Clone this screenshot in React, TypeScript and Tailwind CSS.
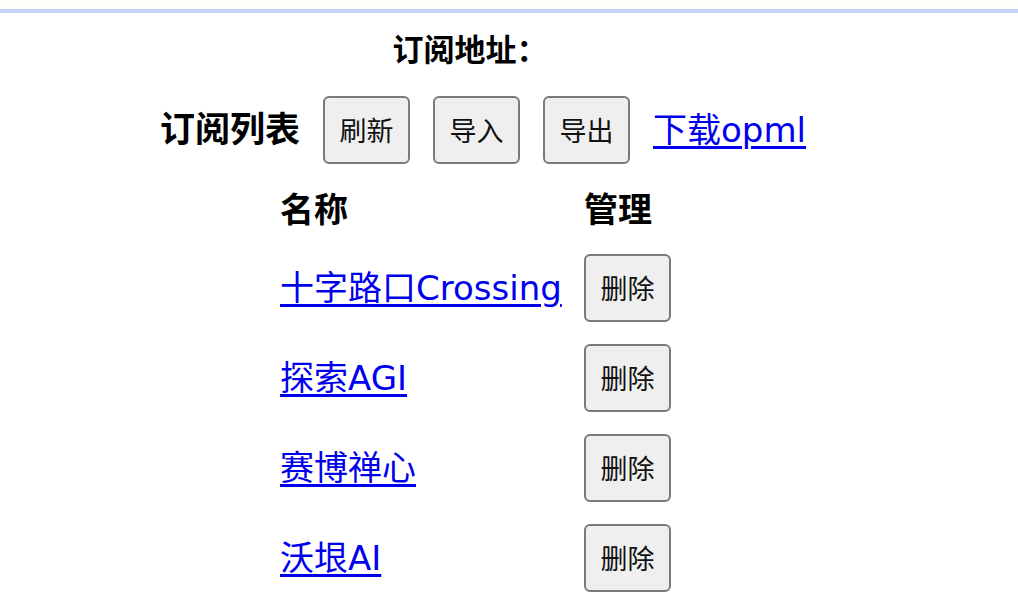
import React from "react";

const font = "font-['DejaVu_Sans','Noto_Sans_CJK_SC',sans-serif]";

const feeds = [
  { name: "十字路口Crossing" },
  { name: "探索AGI" },
  { name: "赛博禅心" },
  { name: "沃垠AI" },
];

const Btn = ({ children }: { children: React.ReactNode }) => (
  <button className="h-[68px] w-[87px] shrink-0 rounded-[6px] border-2 border-[#7a7a7a] bg-[#efefef] text-[27px] leading-[32px] text-[#111] font-['Noto_Sans_CJK_SC',sans-serif]">
    {children}
  </button>
);

export default function App() {
  return (
    <div className={`min-h-[604px] bg-white ${font}`}>
      <div className="h-[9px] bg-[#fefef9]" />
      <div className="h-[4px] bg-[#c9d3f5]" />

      <div className="flex flex-col items-center pr-[62px]">
        <h3 className="mt-[17px] mr-[16px] text-[31px] font-bold leading-[40px] text-black">
          订阅地址：
        </h3>

        <div className="mt-[26px] ml-[10px] flex items-center gap-[23px]">
          <h2 className="text-[35px] font-bold leading-[40px] text-black">订阅列表</h2>
          <Btn>刷新</Btn>
          <Btn>导入</Btn>
          <Btn>导出</Btn>
          <a href="#" className="text-[34px] leading-[40px] text-[#0000ee] underline underline-offset-[4px]">
            下载opml
          </a>
        </div>

        <div className="mt-[26px] mr-[5px] grid grid-cols-[282px_87px] gap-x-[22px] gap-y-[22px]">
          <div className="mb-[2px] text-[34px] font-bold leading-[40px] text-black">名称</div>
          <div className="mb-[2px] text-[34px] font-bold leading-[40px] text-black">管理</div>
          {feeds.map((f, i) => (
            <React.Fragment key={i}>
              <div className="flex items-center">
                <a href="#" className="whitespace-nowrap text-[34px] leading-[40px] text-[#0000ee] underline underline-offset-[4px]">
                  {f.name}
                </a>
              </div>
              <div className="flex items-center">
                <Btn>删除</Btn>
              </div>
            </React.Fragment>
          ))}
        </div>
      </div>
    </div>
  );
}
